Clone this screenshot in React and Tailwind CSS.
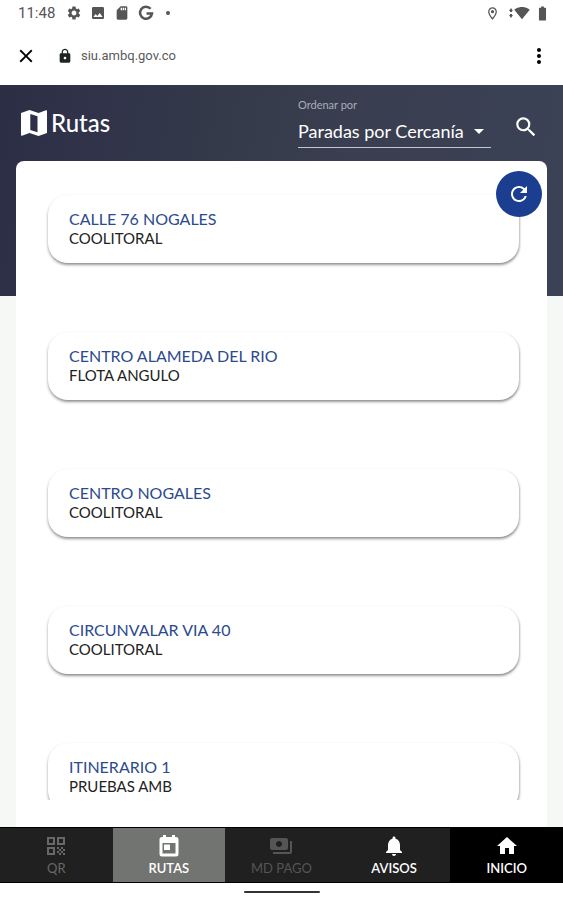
import React, { useState } from 'react';
import {
  MdSettings,
  MdImage,
  MdSdCard,
  MdOutlineLocationOn,
  MdSignalWifi4Bar,
  MdBatteryFull,
  MdClose,
  MdLock,
  MdMoreVert,
  MdArrowDropDown,
  MdSearch,
  MdRefresh,
  MdQrCode,
  MdPayments,
  MdNotifications,
  MdHome,
} from 'react-icons/md';

const CalendarIcon = ({ size }) => (
  <svg width={size} height={size} viewBox="0 0 24 24" fill="currentColor">
    <path
      fillRule="evenodd"
      d="M6 1h3v2h6V1h3v2h1a2.5 2.5 0 0 1 2.5 2.5V20A2.5 2.5 0 0 1 19 22.5H5A2.5 2.5 0 0 1 2.5 20V5.5A2.5 2.5 0 0 1 5 3h1zM5.500 9v10.500h13V9z"
    />
    <path d="M7 10.5h6V16H7z" />
  </svg>
);

const MapIcon = () => (
  <svg width="26" height="28" viewBox="0 0 26 28" fill="currentColor">
    <path
      fillRule="evenodd"
      d="M0 4L8.500 1L17.500 4L25 1.200Q26 1 26 2V24L17.500 27L8.500 24L1 26.800Q0 27 0 26zM9.300 5V21L16.500 23.300V7.300z"
    />
  </svg>
);

const routes = [
  { name: 'CALLE 76 NOGALES', company: 'COOLITORAL' },
  { name: 'CENTRO ALAMEDA DEL RIO', company: 'FLOTA ANGULO' },
  { name: 'CENTRO NOGALES', company: 'COOLITORAL' },
  { name: 'CIRCUNVALAR VIA 40', company: 'COOLITORAL' },
  { name: 'ITINERARIO 1', company: 'PRUEBAS AMB' },
];

const tabs = [
  { label: 'QR', icon: MdQrCode, style: 'bg-[#202020] text-[#686868]' },
  { label: 'RUTAS', icon: CalendarIcon, style: 'bg-[#717471] text-white font-semibold' },
  { label: 'MD PAGO', icon: MdPayments, style: 'bg-[#202020] text-[#555555]' },
  { label: 'AVISOS', icon: MdNotifications, style: 'bg-[#202020] text-white font-semibold' },
  { label: 'INICIO', icon: MdHome, style: 'bg-black text-white font-semibold' },
];

const StatusBar = () => (
  <div className="flex items-center justify-between h-[26px] pl-[18px] pr-3 text-[#555555]">
    <div className="flex items-center gap-2">
      <span className="w-10 font-[Roboto,sans-serif] text-[15px]">11:48</span>
      <MdSettings size={16} />
      <MdImage size={16} />
      <MdSdCard size={16} />
      {/* Google */}
      <svg width="16" height="16" viewBox="0 0 16 16" fill="none" stroke="currentColor" strokeWidth="2.5">
        <path d="M12.6 3.8A6 6 0 1 0 14 8.5H8.5" />
      </svg>
      <span className="ml-1 size-1 rounded-full bg-[#555555]" />
    </div>
    <div className="flex items-center">
      <MdOutlineLocationOn size={15} />
      {/* Data arrows */}
      <svg className="ml-2" width="6" height="12" viewBox="0 0 6 12" fill="currentColor">
        <path d="M3 1L5 4H4V5H2V4H1zM3 11L1 8H2V7H4V8H5z" />
      </svg>
      <MdSignalWifi4Bar size={16} />
      <MdBatteryFull size={17} className="ml-1" />
    </div>
  </div>
);

const AddressBar = () => (
  <div className="flex items-center h-[59px] pl-[15px] pr-3">
    <button aria-label="Cerrar" className="text-black">
      <MdClose size={22} />
    </button>
    <MdLock size={16} className="ml-5 text-[#1f2525]" />
    <span className="ml-2 flex-1 font-[Roboto,sans-serif] text-[13px] text-[#5a5a5a]">siu.ambq.gov.co</span>
    <button aria-label="Menú" className="text-black">
      <MdMoreVert size={24} />
    </button>
  </div>
);

const Header = () => {
  const [order, setOrder] = useState('cercania');

  return (
    <header className="flex items-start justify-between h-[76px] pl-[21px] pr-6 text-white">
      <h1 className="flex items-center gap-1 mt-[22px] text-2xl leading-8 font-medium">
        <MapIcon />
        Rutas
      </h1>
      <div className="flex items-start gap-[22px]">
        <div className="w-[193px] pt-3">
          <label htmlFor="order" className="block text-[11px] leading-4 text-[#a9adb8]">
            Ordenar por
          </label>
          <div className="relative border-b border-[#c3c6cd]">
            <select
              id="order"
              value={order}
              onChange={(e) => setOrder(e.target.value)}
              className="w-full h-[34px] pt-0.5 appearance-none bg-transparent text-lg focus:outline-none"
            >
              <option value="cercania">Paradas por Cercanía</option>
              <option value="nombre">Nombre</option>
            </select>
            <MdArrowDropDown size={24} className="pointer-events-none absolute right-0 top-1.5" />
          </div>
        </div>
        <button aria-label="Buscar" className="mt-[29px]">
          <MdSearch size={26} />
        </button>
      </div>
    </header>
  );
};

const RouteCard = ({ name, company }) => (
  <li className="h-[68px] shrink-0 rounded-[20px] px-[21px] pt-3.5 bg-white shadow-[0_2px_3px_rgba(0,0,0,0.38),1px_1px_2px_rgba(0,0,0,0.12)]">
    <a href="#" className="block text-base leading-5 text-[#2c4a8c]">
      {name}
    </a>
    <p className="text-[15px] leading-[18px] text-[#222222]">{company}</p>
  </li>
);

const BottomNav = () => (
  <nav className="grid grid-cols-5 border-y border-black">
    {tabs.map(({ label, icon: Icon, style }) => (
      <button key={label} className={`flex flex-col items-center h-[54px] pt-1.5 ${style}`}>
        <Icon size={24} />
        <span className="text-[13px] leading-5">{label}</span>
      </button>
    ))}
  </nav>
);

const App = () => {
  return (
    <div className="flex flex-col h-screen bg-white font-[Lato,sans-serif]">
      <StatusBar />
      <AddressBar />

      <div className="flex flex-col flex-1 min-h-0 bg-[#f6f8f5] bg-[linear-gradient(100deg,#2b2e45_0%,#30334a_18%,#343a49_38%,#393f50_60%,#3c4256_100%)] bg-[length:100%_211px] bg-no-repeat">
        <Header />
        <main className="relative flex-1 min-h-0 mx-4 pb-[27px] rounded-t-lg bg-white">
          <button
            aria-label="Actualizar"
            className="absolute z-10 right-[5px] top-2.5 flex items-center justify-center size-[46px] rounded-full bg-[#1c3e90] text-white"
          >
            <MdRefresh size={24} />
          </button>
          <ul className="flex flex-col gap-[69px] h-full overflow-hidden pl-8 pr-7 pt-[34px]">
            {routes.map((route) => (
              <RouteCard key={route.name} {...route} />
            ))}
          </ul>
        </main>
      </div>

      <BottomNav />
      {/* Gesture bar */}
      <div className="flex justify-center pt-2 h-[17px]">
        <span className="w-[76px] h-0.5 rounded-full bg-[#333333]" />
      </div>
    </div>
  );
};

export default App;
